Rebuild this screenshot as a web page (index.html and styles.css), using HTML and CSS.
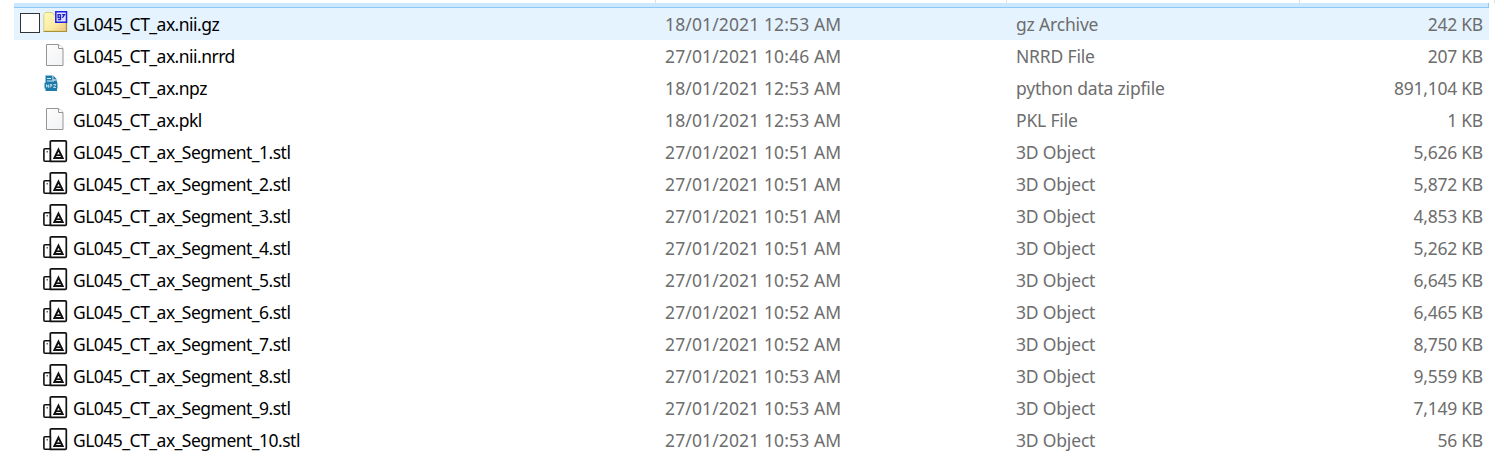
FILE: index.html
```
<!DOCTYPE html>
<html lang="en">
<head>
<meta charset="utf-8">
<title>Files</title>
<link rel="stylesheet" href="styles.css">
</head>
<body>
<svg class="defs" width="0" height="0">
  <defs>
    <linearGradient id="folder-fill" x1="0" y1="0" x2="1" y2="1"><stop offset="0" stop-color="#fffbb8"/><stop offset=".6" stop-color="#fbeaa4"/><stop offset="1" stop-color="#ecc080"/></linearGradient>
    <linearGradient id="page-fill" x1="0" y1="0" x2="1" y2="1"><stop offset="0" stop-color="#fdfdfd"/><stop offset="1" stop-color="#f1f2f4"/></linearGradient>
  </defs>
  <symbol id="archive" viewBox="0 0 26 26">
    <path d="M.8 21V4.500l1.500-2h7l2 2.500h12v16z" fill="url(#folder-fill)" stroke="#d8cf80"/>
    <path d="M.5 21.500h23V7" fill="none" stroke="#a99336" stroke-width="1.200"/>
    <path d="M12.800 1.700h10.700v10.500H12.800z" fill="#dfe3f8" stroke="#2020e8" stroke-width="1.500"/>
    <path d="M17.500 4.700h-2.400v2.800h2.400M17.500 4.200v5.500h-2.600M19 4.700h2.500l-2.200 3.200" fill="none" stroke="#2222c8" stroke-width="1.300"/>
  </symbol>
  <symbol id="page" viewBox="0 0 26 26">
    <path d="M3.500 2.500h12l4.500 4v17H3.500z" fill="url(#page-fill)" stroke="#959595"/>
    <path d="M15.500 2.500v4H20" fill="#fff" stroke="#959595"/>
  </symbol>
  <symbol id="npz" viewBox="0 0 26 26">
    <path d="M2.500 1.500h7v5h4.500V17H2.500z" fill="#1d7ba9"/>
    <path d="M10.300 1.500L14 5.500h-3.700z" fill="#1d7ba9"/>
    <path d="M4 4.500h4M4 7h7" stroke="#d6eaf3" stroke-width="1"/>
    <path d="M1.500 8.800h13v5.700h-13z" fill="#1d7ba9"/>
    <path d="M3.500 13.500v-3l2 3v-3M7.200 13.500v-3h1.600v1.600H7.200M10.500 10.500H13l-2.500 3H13" fill="none" stroke="#d6eaf3" stroke-width=".8"/>
  </symbol>
  <symbol id="object" viewBox="0 0 26 26">
    <path d="M7.300 3.800Q7.300 2.800 8.300 2.800h14q1 0 1 1v18.500q0 1-1 1h-15z" fill="#fff" stroke="#111" stroke-width="1.700"/>
    <path d="M7 10.800H1.900q-1 0-1 1v10.500q0 1 1 1h6" fill="#fff" stroke="#111" stroke-width="1.600"/>
    <path d="M7.300 10v13" stroke="#111" stroke-width="1.700"/>
    <path d="M4.200 13v1.500" stroke="#333" stroke-width="1.200"/>
    <path d="M15.500 11.600l4.100 8.400h-8.200z" fill="#fff" stroke="#111" stroke-width="2"/>
    <path d="M13 17.200h5" stroke="#111" stroke-width="1.700"/>
  </symbol>
</svg>
<div class="header"><i class="col-name"></i><i class="col-date"></i><i class="col-type"></i><i class="col-size"></i></div>
<div class="selection"></div>
<main class="list">
<div class="row hover"><span class="check"></span><svg class="icon"><use href="#archive"/></svg><span class="name">GL045_CT_ax.nii.gz</span><span class="date">18/01/2021 12:53 AM</span><span class="type">gz Archive</span><span class="size">242 KB</span></div>
<div class="row"><svg class="icon"><use href="#page"/></svg><span class="name">GL045_CT_ax.nii.nrrd</span><span class="date">27/01/2021 10:46 AM</span><span class="type">NRRD File</span><span class="size">207 KB</span></div>
<div class="row"><svg class="icon"><use href="#npz"/></svg><span class="name">GL045_CT_ax.npz</span><span class="date">18/01/2021 12:53 AM</span><span class="type">python data zipfile</span><span class="size">891,104 KB</span></div>
<div class="row"><svg class="icon"><use href="#page"/></svg><span class="name">GL045_CT_ax.pkl</span><span class="date">18/01/2021 12:53 AM</span><span class="type">PKL File</span><span class="size">1 KB</span></div>
<div class="row"><svg class="icon"><use href="#object"/></svg><span class="name">GL045_CT_ax_Segment_1.stl</span><span class="date">27/01/2021 10:51 AM</span><span class="type">3D Object</span><span class="size">5,626 KB</span></div>
<div class="row"><svg class="icon"><use href="#object"/></svg><span class="name">GL045_CT_ax_Segment_2.stl</span><span class="date">27/01/2021 10:51 AM</span><span class="type">3D Object</span><span class="size">5,872 KB</span></div>
<div class="row"><svg class="icon"><use href="#object"/></svg><span class="name">GL045_CT_ax_Segment_3.stl</span><span class="date">27/01/2021 10:51 AM</span><span class="type">3D Object</span><span class="size">4,853 KB</span></div>
<div class="row"><svg class="icon"><use href="#object"/></svg><span class="name">GL045_CT_ax_Segment_4.stl</span><span class="date">27/01/2021 10:51 AM</span><span class="type">3D Object</span><span class="size">5,262 KB</span></div>
<div class="row"><svg class="icon"><use href="#object"/></svg><span class="name">GL045_CT_ax_Segment_5.stl</span><span class="date">27/01/2021 10:52 AM</span><span class="type">3D Object</span><span class="size">6,645 KB</span></div>
<div class="row"><svg class="icon"><use href="#object"/></svg><span class="name">GL045_CT_ax_Segment_6.stl</span><span class="date">27/01/2021 10:52 AM</span><span class="type">3D Object</span><span class="size">6,465 KB</span></div>
<div class="row"><svg class="icon"><use href="#object"/></svg><span class="name">GL045_CT_ax_Segment_7.stl</span><span class="date">27/01/2021 10:52 AM</span><span class="type">3D Object</span><span class="size">8,750 KB</span></div>
<div class="row"><svg class="icon"><use href="#object"/></svg><span class="name">GL045_CT_ax_Segment_8.stl</span><span class="date">27/01/2021 10:53 AM</span><span class="type">3D Object</span><span class="size">9,559 KB</span></div>
<div class="row"><svg class="icon"><use href="#object"/></svg><span class="name">GL045_CT_ax_Segment_9.stl</span><span class="date">27/01/2021 10:53 AM</span><span class="type">3D Object</span><span class="size">7,149 KB</span></div>
<div class="row"><svg class="icon"><use href="#object"/></svg><span class="name">GL045_CT_ax_Segment_10.stl</span><span class="date">27/01/2021 10:53 AM</span><span class="type">3D Object</span><span class="size">56 KB</span></div>
</main>
</body>
</html>
```
FILE: styles.css
```
* { box-sizing: border-box; }
body { margin: 0; background: #fff; color: #000; font: 17.5px/32px "Noto Sans", sans-serif; overflow: hidden; }
.defs { display: block; }
.header { display: flex; height: 3px; }
.header i { border-right: 1px solid #e0e0e0; }
.col-name { width: 656px; }
.col-date { width: 351px; }
.col-type { width: 293px; }
.col-size { width: 195px; }
.selection { height: 5px; width: 1475px; margin-left: 14px; background: #cce8ff; border: solid #8ec8f6; border-width: 0 1px 1px 0; }
.list { width: 1475px; margin-left: 14px; }
.row { display: grid; grid-template-columns: 28px 31px 592px 351px 300px 167px; height: 32px; white-space: nowrap; }
.hover { background: #e5f3ff; }
.row > * { grid-row: 1; }
.check { grid-column: 1; width: 20px; height: 20px; margin: 5px 0 0 6px; background: #fff; border: 1px solid #333; }
.icon { grid-column: 2; width: 26px; height: 26px; margin: 2px 0 0 1px; }
.name { grid-column: 3; letter-spacing: -0.52px; }
.date, .type, .size { color: #6d6d6d; }
.date { grid-column: 4; letter-spacing: 0.12px; }
.type { grid-column: 5; letter-spacing: -0.18px; }
.size { grid-column: 6; letter-spacing: -0.24px; text-align: right; }
```
